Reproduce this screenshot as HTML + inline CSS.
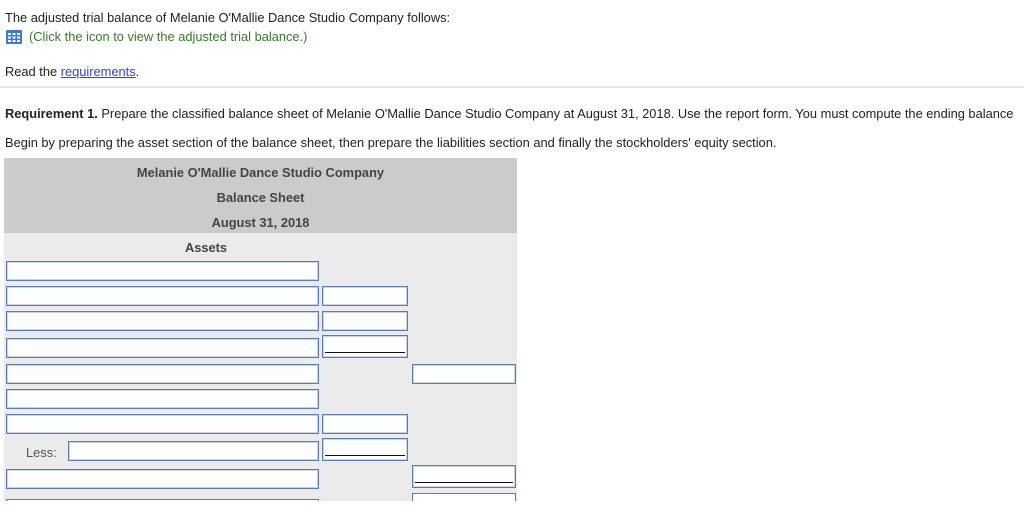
<!DOCTYPE html>
<html><head><style>
body{margin:0;width:1024px;height:512px;overflow:hidden;background:#fff;font-family:"Liberation Sans",Arial,sans-serif;font-size:12.85px;color:#222;position:relative}
.t{position:absolute;white-space:nowrap}
.b{position:absolute;background:#fff;border:1px solid #5a7db8;box-shadow:inset 0 0 0 1px #c8d3e6;box-sizing:border-box;height:20px}
.u::after{content:"";position:absolute;left:2px;right:2px;bottom:4px;border-bottom:1px solid #111}
</style></head><body>
<div class="t" style="left:5px;top:10px">The adjusted trial balance of Melanie O'Mallie Dance Studio Company follows:</div>
<svg style="position:absolute;left:6px;top:30px" width="16" height="14" viewBox="0 0 16 14"><rect x="0" y="0" width="16" height="14" rx="1" fill="#3a7bd5"/><g fill="#fff"><rect x="2" y="3" width="3" height="2"/><rect x="6.5" y="3" width="3" height="2"/><rect x="11" y="3" width="3" height="2"/><rect x="2" y="6.5" width="3" height="2"/><rect x="6.5" y="6.5" width="3" height="2"/><rect x="11" y="6.5" width="3" height="2"/><rect x="2" y="10" width="3" height="2"/><rect x="6.5" y="10" width="3" height="2"/><rect x="11" y="10" width="3" height="2"/></g></svg>
<div class="t" style="left:29px;top:29px;color:#3a7a2a">(Click the icon to view the adjusted trial balance.)</div>
<div class="t" style="left:5px;top:64px">Read the <span style="color:#3344cc;text-decoration:underline">requirements</span>.</div>
<div style="position:absolute;left:0;top:86px;width:1024px;height:2px;background:#e4e4e4"></div>
<div class="t" style="left:5px;top:106px"><b>Requirement 1.</b> Prepare the classified balance sheet of Melanie O'Mallie Dance Studio Company at August 31, 2018. Use the report form. You must compute the ending balance</div>
<div class="t" style="left:5px;top:135px">Begin by preparing the asset section of the balance sheet, then prepare the liabilities section and finally the stockholders' equity section.</div>
<div style="position:absolute;left:4px;top:158px;width:513px;height:75px;background:#cbcbcb"></div>
<div style="position:absolute;left:4px;top:233px;width:513px;height:268px;background:#ebebeb"></div>
<div class="t" style="left:4px;width:513px;text-align:center;top:165px;font-weight:bold;color:#444">Melanie O'Mallie Dance Studio Company</div>
<div class="t" style="left:4px;width:513px;text-align:center;top:190px;font-weight:bold;color:#444">Balance Sheet</div>
<div class="t" style="left:4px;width:513px;text-align:center;top:215px;font-weight:bold;color:#444">August 31, 2018</div>
<div class="t" style="left:4px;width:404px;text-align:center;top:240px;font-weight:bold;color:#444">Assets</div>
<div class="b" style="left:6px;top:261px;width:313px"></div>
<div class="b" style="left:6px;top:286px;width:313px"></div><div class="b" style="left:322px;top:286px;width:86px"></div>
<div class="b" style="left:6px;top:311px;width:313px"></div><div class="b" style="left:322px;top:311px;width:86px"></div>
<div class="b" style="left:6px;top:338px;width:313px"></div><div class="b u" style="left:322px;top:335px;width:86px;height:23px"></div>
<div class="b" style="left:6px;top:364px;width:313px"></div><div class="b" style="left:412px;top:364px;width:104px"></div>
<div class="b" style="left:6px;top:389px;width:313px"></div>
<div class="b" style="left:6px;top:414px;width:313px"></div><div class="b" style="left:322px;top:414px;width:86px"></div>
<div class="t" style="left:26px;top:445px;color:#555">Less:</div>
<div class="b" style="left:68px;top:441px;width:251px"></div><div class="b u" style="left:322px;top:438px;width:86px;height:23px"></div>
<div class="b" style="left:6px;top:469px;width:313px"></div><div class="b u" style="left:412px;top:465px;width:104px;height:23px"></div>
<div class="b" style="left:6px;top:499px;width:313px;height:2px;box-shadow:none;border-bottom:none"></div>
<div class="b" style="left:412px;top:493px;width:104px;height:8px;box-shadow:none;border-bottom:none"></div>
</body></html>
